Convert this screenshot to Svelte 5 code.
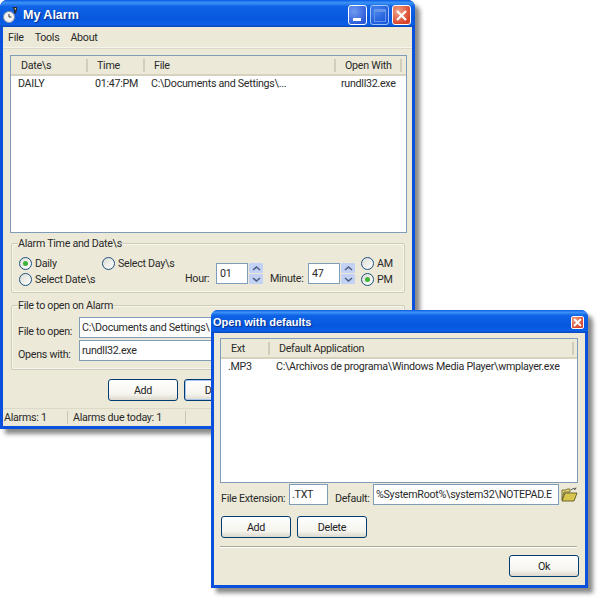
<script>
	const cols = [
		{ name: 'Date\\s', w: 76 },
		{ name: 'Time', w: 57 },
		{ name: 'File', w: 191 },
		{ name: 'Open With', w: 66 }
	];
	const defCols = [
		{ name: 'Ext', w: 48 },
		{ name: 'Default Application', w: 304 }
	];
</script>

{#snippet spin()}
	<div class="spin">
		<div class="spin-btn"><svg width="9" height="5" viewBox="0 0 9 5"><path d="M1 4 L4.5 1 L8 4" fill="none" stroke="#4d6185" stroke-width="1.6" /></svg></div>
		<div class="spin-btn"><svg width="9" height="5" viewBox="0 0 9 5"><path d="M1 1 L4.5 4 L8 1" fill="none" stroke="#4d6185" stroke-width="1.6" /></svg></div>
	</div>
{/snippet}

{#snippet radio(label, on)}
	<div class="radio-row">
		<span class="radio">{#if on}<span class="dot"></span>{/if}</span>
		<span>{label}</span>
	</div>
{/snippet}

<div class="desktop">
	<div class="window main">
		<div class="titlebar">
			<svg class="app-icon" width="18" height="18" viewBox="0 0 18 18">
				<circle cx="7" cy="11" r="5.5" fill="#f2f2f2" stroke="#8a93a8" />
				<path d="M7 8 V11 H9.5" fill="none" stroke="#333" stroke-width="1" />
				<path d="M10.5 1 L15 1 L15 4 L13.5 8 L12 7 L12 4 Z" fill="#2b2b2b" />
				<path d="M12.5 2 L14 2 L13.5 4.5 Z" fill="#e8d9a0" />
			</svg>
			<span class="title-text">My Alarm</span>
			<div class="title-btns">
				<div class="tb-btn blue"><span class="min-bar"></span></div>
				<div class="tb-btn blue off"><span class="max-box"></span></div>
				<div class="tb-btn red">
					<svg width="13" height="13" viewBox="0 0 13 13"><path d="M2 2 L11 11 M11 2 L2 11" stroke="#fff" stroke-width="2.2" /></svg>
				</div>
			</div>
		</div>
		<div class="client">
			<div class="menubar">
				<span>File</span><span>Tools</span><span>About</span>
			</div>
			<div class="list main-list">
				<div class="list-head">
					{#each cols as col}
						<div class="head-cell" style="width: {col.w}px">{col.name}</div>
					{/each}
				</div>
				<div class="list-row">
					<span style="width: 77px">DAILY</span>
					<span style="width: 56px">01:47:PM</span>
					<span style="width: 190px">C:\Documents and Settings\...</span>
					<span>rundll32.exe</span>
				</div>
			</div>

			<fieldset class="group time-group">
				<legend>Alarm Time and Date\s</legend>
				<div class="radios">
					{@render radio('Daily', true)}
					{@render radio('Select Day\\s', false)}
					{@render radio('Select Date\\s', false)}
				</div>
				<div class="time-fields">
					<span class="lbl-hour">Hour:</span>
					<div class="input num">01</div>
					{@render spin()}
					<span class="lbl-min">Minute:</span>
					<div class="input num">47</div>
					{@render spin()}
				</div>
				<div class="ampm">
					{@render radio('AM', false)}
					{@render radio('PM', true)}
				</div>
			</fieldset>

			<fieldset class="group file-group">
				<legend>File to open on Alarm</legend>
				<div class="file-row">
					<span class="file-lbl">File to open:</span>
					<div class="input wide">C:\Documents and Settings\</div>
				</div>
				<div class="file-row">
					<span class="file-lbl">Opens with:</span>
					<div class="input wide">rundll32.exe</div>
				</div>
			</fieldset>

			<div class="main-btns">
				<button class="xp-btn">Add</button>
				<button class="xp-btn focus">Delete</button>
			</div>

			<div class="statusbar">
				<span class="st1">Alarms: 1</span>
				<span class="st2">Alarms due today: 1</span>
			</div>
		</div>
	</div>

	<div class="window dialog">
		<div class="titlebar small">
			<span class="title-text small-title">Open with defaults</span>
			<div class="tb-btn red tiny">
				<svg width="9" height="9" viewBox="0 0 9 9"><path d="M1 1 L8 8 M8 1 L1 8" stroke="#fff" stroke-width="1.8" /></svg>
			</div>
		</div>
		<div class="client dlg-client">
			<div class="list dlg-list">
				<div class="list-head">
					{#each defCols as col}
						<div class="head-cell" style="width: {col.w}px">{col.name}</div>
					{/each}
				</div>
				<div class="list-row">
					<span style="width: 48px">.MP3</span>
					<span>C:\Archivos de programa\Windows Media Player\wmplayer.exe</span>
				</div>
			</div>
			<div class="ext-row">
				<span class="ext-lbl">File Extension:</span>
				<div class="input ext">.TXT</div>
				<span class="def-lbl">Default:</span>
				<div class="input def">%SystemRoot%\system32\NOTEPAD.E</div>
				<svg class="folder" width="17" height="15" viewBox="0 0 17 15">
					<path d="M1 3 H5 L6 2 H9 V5 H3 L1 13 Z" fill="#e9d777" stroke="#5f5a1e" stroke-width="0.8" />
					<path d="M1 14 L4 6 H16 L13 14 Z" fill="#d9c64f" stroke="#5f5a1e" stroke-width="0.9" />
					<path d="M10 3 Q12 0.5 14.5 2 M14.5 2 L15 0.5 M14.5 2 L13 2.5" fill="none" stroke="#444" stroke-width="0.9" />
				</svg>
			</div>
			<div class="dlg-btns">
				<button class="xp-btn">Add</button>
				<button class="xp-btn">Delete</button>
			</div>
			<div class="rule"></div>
			<div class="ok-row">
				<button class="xp-btn">Ok</button>
			</div>
		</div>
	</div>
</div>

<style>
	:global(body) {
		margin: 0;
		background: #fff;
	}

	.desktop {
		position: relative;
		width: 600px;
		height: 600px;
		overflow: hidden;
		font-family: Roboto, "Liberation Sans", sans-serif;
		font-size: 10.7px;
		letter-spacing: -0.28px;
		color: #2a2a2a;
	}

	/* Windows */

	.window {
		position: absolute;
		display: flex;
		flex-direction: column;
		box-sizing: border-box;
		border-radius: 7px 7px 0 0;
		box-shadow: 5px 5px 4px rgba(60, 60, 60, 0.6);
		background: #0a50dc;
	}

	.main {
		left: 0;
		top: 0;
		width: 415px;
		height: 429px;
	}

	.dialog {
		left: 211px;
		top: 310px;
		width: 377px;
		height: 278px;
	}

	.titlebar {
		display: flex;
		align-items: center;
		box-sizing: border-box;
		flex: 0 0 27px;
		padding: 3px 4px 0 2px;
		border-radius: 7px 7px 0 0;
		background: linear-gradient(180deg, #0a5be4 0%, #3d93f7 10%, #0f63e6 24%, #0657de 70%, #0a5fe8 90%, #0846b8 100%);
	}

	.titlebar.small {
		flex-basis: 23px;
		padding: 1px 4px 0 2px;
	}

	.app-icon {
		margin-right: 3px;
	}

	.title-text {
		color: #fff;
		font-family: "Liberation Sans", sans-serif;
		font-weight: 700;
		font-size: 12.5px;
		letter-spacing: 0;
		text-shadow: 1px 1px 1px #0a2f8c;
	}

	.small-title {
		font-size: 11px;
	}

	.title-btns {
		display: flex;
		gap: 3px;
		margin-left: auto;
	}

	.tb-btn {
		display: flex;
		align-items: center;
		justify-content: center;
		position: relative;
		box-sizing: border-box;
		width: 19px;
		height: 20px;
		border: 1px solid #fff;
		border-radius: 3px;
	}

	.blue {
		background: radial-gradient(circle at 30% 30%, #6f9cf0, #2a58d8 80%);
	}

	.blue.off {
		opacity: 0.6;
	}

	.red {
		background: radial-gradient(circle at 30% 30%, #f0a488, #d8432a 75%);
	}

	.tiny {
		width: 13px;
		height: 13px;
		margin-left: auto;
		border-radius: 2px;
	}

	.min-bar {
		position: absolute;
		left: 4px;
		bottom: 3px;
		width: 8px;
		height: 3px;
		background: #fff;
	}

	.max-box {
		width: 10px;
		height: 9px;
		border: 1px solid #9db8ee;
		border-top-width: 3px;
	}

	.client {
		display: flex;
		flex-direction: column;
		flex: 1;
		min-height: 0;
		margin: 0 3px 3px;
		background: #ece9d8;
	}

	/* Menu */

	.menubar {
		display: flex;
		gap: 11px;
		align-items: center;
		height: 20px;
		padding-left: 5px;
		border-bottom: 1px solid #f6f5ec;
		box-shadow: 0 1px 0 #dcd9c8;
		margin-bottom: 7px;
	}

	/* List views */

	.list {
		box-sizing: border-box;
		margin-left: 7px;
		background: #fff;
		border: 1px solid #7f9db9;
	}

	.main-list {
		width: 397px;
		height: 178px;
	}

	.list-head {
		display: flex;
		height: 18px;
		align-items: center;
		padding-left: 1px;
		background: #ece9d8;
		border-bottom: 2px solid #d6d2bd;
	}

	.head-cell {
		box-sizing: border-box;
		height: 13px;
		line-height: 13px;
		padding-left: 9px;
		border-right: 2px solid #d0cdbb;
		white-space: nowrap;
		overflow: hidden;
	}

	.list-row {
		display: flex;
		padding: 0 0 0 7px;
		white-space: nowrap;
		line-height: 15px;
	}

	.list-row span {
		flex: none;
	}

	/* Group boxes */

	.group {
		box-sizing: border-box;
		margin: 0 0 0 8px;
		padding: 0;
		min-width: 0;
		border: 1px solid #cfccb9;
		border-radius: 2px;
		box-shadow: inset 0 0 0 1px #f7f6ee;
	}

	.group legend {
		padding: 0;
		margin-left: 6px;
		line-height: 13px;
	}

	.time-group {
		display: flex;
		width: 394px;
		height: 56px;
		margin-top: 4px;
	}

	.radios {
		display: grid;
		grid-template-columns: 83px auto;
		grid-auto-rows: 16px;
		align-content: start;
		width: 166px;
		margin: 5px 0 0 7px;
	}

	.radio-row {
		display: flex;
		align-items: center;
		gap: 3px;
		white-space: nowrap;
	}

	.radio {
		display: flex;
		align-items: center;
		justify-content: center;
		box-sizing: border-box;
		flex: none;
		width: 13px;
		height: 13px;
		border: 1px solid #1c5180;
		border-radius: 50%;
		background: linear-gradient(135deg, #dcdcd4, #fff);
	}

	.dot {
		width: 5px;
		height: 5px;
		border-radius: 50%;
		background: #3cb43c;
	}

	.time-fields {
		display: flex;
		align-items: flex-start;
		margin-top: 13px;
	}

	.lbl-hour,
	.lbl-min {
		margin-top: 9px;
	}

	.lbl-hour {
		width: 31px;
	}

	.lbl-min {
		width: 38px;
		margin-left: 7px;
	}

	.input {
		box-sizing: border-box;
		background: #fff;
		border: 1px solid #7f9db9;
		white-space: nowrap;
		overflow: hidden;
		padding: 2px 2px 0;
		line-height: 15px;
	}

	.num {
		width: 32px;
		height: 21px;
		padding-left: 3px;
	}

	.spin {
		display: flex;
		flex-direction: column;
		gap: 1px;
		margin-left: 1px;
	}

	.spin-btn {
		display: flex;
		align-items: center;
		justify-content: center;
		width: 14px;
		height: 10px;
		background: #c3d2f4;
		border-radius: 1px;
	}

	.ampm {
		display: grid;
		grid-auto-rows: 16px;
		margin: 5px 0 0 6px;
	}

	.file-group {
		width: 394px;
		height: 71px;
		margin-top: 6px;
	}

	.file-row {
		display: flex;
		align-items: flex-start;
		margin: 2px 0 0 6px;
	}

	.file-row:first-of-type {
		margin-top: 5px;
	}

	.file-lbl {
		width: 61px;
		flex: none;
		padding-top: 8px;
		white-space: nowrap;
	}

	.wide {
		width: 320px;
		height: 21px;
	}

	/* Buttons */

	.xp-btn {
		box-sizing: border-box;
		width: 70px;
		height: 22px;
		padding: 0;
		border: 1px solid #003c74;
		border-radius: 3px;
		background: linear-gradient(180deg, #fff 0%, #f5f4ee 70%, #dcd8cc 100%);
		font: inherit;
		letter-spacing: inherit;
		color: #222;
	}

	.xp-btn.focus {
		box-shadow: inset 0 0 0 1px #a9c3ea;
	}

	.main-btns {
		display: flex;
		gap: 6px;
		margin: 9px 0 0 105px;
	}

	/* Status bar */

	.statusbar {
		display: flex;
		align-items: center;
		height: 17px;
		margin-top: auto;
		white-space: nowrap;
		border-top: 1px solid #dcd9c8;
	}

	.st1 {
		box-sizing: border-box;
		width: 65px;
		padding-left: 1px;
		border-right: 1px solid #c9c6b4;
	}

	.st2 {
		box-sizing: border-box;
		width: 118px;
		padding-left: 5px;
		border-right: 1px solid #c9c6b4;
	}

	/* Dialog */

	.dlg-client {
		margin: 0 3px 3px;
		padding: 5px 6px 0;
	}

	.dlg-list {
		width: 358px;
		height: 145px;
		margin-left: 0;
	}

	.ext-row {
		display: flex;
		align-items: flex-start;
		margin-top: 1px;
	}

	.ext-lbl {
		margin: 8px 0 0 1px;
		width: 68px;
		white-space: nowrap;
	}

	.ext {
		width: 39px;
		height: 21px;
	}

	.def-lbl {
		margin: 8px 0 0 7px;
		width: 38px;
	}

	.def {
		width: 186px;
		height: 21px;
	}

	.folder {
		margin: 3px 0 0 2px;
	}

	.dlg-btns {
		display: flex;
		gap: 6px;
		margin: 11px 0 0 1px;
	}

	.rule {
		width: 357px;
		height: 1px;
		margin-top: 8px;
		background: #aca899;
		box-shadow: 0 1px 0 #fff;
	}

	.ok-row {
		display: flex;
		justify-content: flex-end;
		width: 359px;
		margin-top: 8px;
	}
</style>
